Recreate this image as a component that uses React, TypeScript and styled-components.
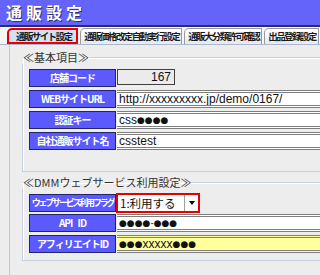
import * as React from 'react'
import styled, { createGlobalStyle } from 'styled-components'

const GlobalStyle = createGlobalStyle`
    html, body { margin: 0; padding: 0; background: #ededed; overflow: hidden; }
    body { font-family: "Noto Sans CJK JP", "Liberation Sans", sans-serif; }
`

const Page = styled.div`
    width: 320px;
    height: 275px;
    overflow: hidden;
    display: flex;
    flex-direction: column;
    background: #ededed;
`

const Header = styled.h1`
    margin: 0;
    height: 27px;
    box-sizing: border-box;
    padding-left: 6px;
    background: #6464fa;
    border-bottom: 2px solid #2b2b6e;
    color: #fff;
    font-size: 16px;
    font-weight: bold;
    letter-spacing: 4px;
    line-height: 25px;
    text-shadow: 1px 1px 0 #30307a;
    white-space: nowrap;
`

const TabBar = styled.div`
    display: flex;
    align-items: flex-end;
    gap: 2px;
    height: 18px;
    box-sizing: border-box;
    padding: 1px 0 0 7px;
    background: #f6f6f6;
    border-bottom: 1px solid #aab8d0;
    white-space: nowrap;
`

const Tab = styled.div<{ $active?: boolean }>`
    flex: none;
    height: 16px;
    box-sizing: border-box;
    padding: 0 ${p => p.$active ? 5 : 2}px 0 ${p => p.$active ? 7 : 3}px;
    border: ${p => p.$active ? '2px solid #e80000' : '1px solid #9a9a9a'};
    border-bottom: ${p => p.$active ? '2px solid #e80000' : 'none'};
    border-top-left-radius: 5px;
    background: ${p => p.$active ? '#d3e1f1' : 'linear-gradient(#ffffff, #e6e9ee)'};
    color: #1a1a1a;
    font-size: 9.5px;
    font-weight: bold;
    letter-spacing: -1.6px;
    line-height: ${p => p.$active ? 12 : 14}px;
`

const Panel = styled.div`
    flex: 1;
    margin-left: 9px;
    border-left: 1px solid #b9c6dc;
    padding: 6px 0 0 12px;
    overflow: hidden;
`

const Fieldset = styled.fieldset<{ $second?: boolean }>`
    margin: ${p => p.$second ? '4px' : '0'} 0 0 0;
    width: 330px;
    box-sizing: border-box;
    padding: ${p => p.$second ? '4px 0 7px 6px' : '5px 0 21px 6px'};
    border: 1px solid #c6cfdf;
    border-right: none;
    box-shadow: inset 1px 1px 0 #ffffff;
    min-width: 0;
`

const Legend = styled.legend`
    margin-left: -7px;
    padding: 0 1px;
    font-size: 11px;
    line-height: 13px;
    color: #333;
    white-space: nowrap;
`

const Rows = styled.div`
    display: flex;
    flex-direction: column;
    gap: 3px;
`

const Row = styled.div`
    display: grid;
    grid-template-columns: 87px 1fr;
    column-gap: 1px;
    height: 18px;
    align-items: center;
`

const Label = styled.div<{ $tight?: boolean }>`
    height: 18px;
    box-sizing: border-box;
    background: #5a5aff;
    border: 1px solid #23236b;
    color: #fff;
    font-size: ${p => p.$tight ? 9 : 10}px;
    font-weight: bold;
    letter-spacing: ${p => p.$tight ? -2.2 : -1}px;
    word-spacing: 4px;
    line-height: 16px;
    text-align: center;
    white-space: nowrap;
    overflow: hidden;
`

const TextCell = styled.div<{ $yellow?: boolean }>`
    height: 18px;
    box-sizing: border-box;
    display: flex;
    align-items: center;
    padding-left: 2px;
    background: ${p => p.$yellow ? '#ffff9c' : '#ffffff'};
    border-top: 3px double #7e7e7e;
    border-bottom: 3px double #7e7e7e;
    font-family: "Liberation Sans", "DejaVu Sans", sans-serif;
    font-size: 12px;
    color: #111;
    white-space: nowrap;
    overflow: hidden;
`

const Dots = styled.span`
    font-family: "DejaVu Sans", sans-serif;
    font-size: 9px;
    letter-spacing: 0;
    color: #111;
`

const ShortInput = styled.div`
    width: 58px;
    height: 16px;
    box-sizing: border-box;
    border: 1px solid #404040;
    background: #ebebeb;
    text-align: right;
    padding-right: 3px;
    font-family: "Liberation Sans", sans-serif;
    font-size: 12px;
    line-height: 14px;
    color: #111;
    margin-top: -2px;
`

const Select = styled.div`
    width: 84px;
    height: 20px;
    box-sizing: border-box;
    display: flex;
    border: 2px solid #e60000;
    background: #fff;
    margin-left: -1px;
`

const SelectText = styled.div`
    flex: 1;
    padding-left: 2px;
    font-size: 11.5px;
    line-height: 16px;
    color: #111;
    white-space: nowrap;
    overflow: hidden;
`

const SelectArrow = styled.div`
    width: 13px;
    border-left: 1px solid #a0a0a0;
    display: flex;
    align-items: center;
    justify-content: center;
`

const Triangle = styled.span`
    width: 0;
    height: 0;
    border-left: 3.5px solid transparent;
    border-right: 3.5px solid transparent;
    border-top: 4px solid #000;
`

interface IRow
{
    label: string
    tight?: boolean
    kind: 'short' | 'text' | 'select'
    value: React.ReactNode
    yellow?: boolean
}

const basicRows: IRow[] = [
    { label: '店舗コード', kind: 'short', value: '167' },
    { label: 'WEBサイトURL', kind: 'text', value: 'http://xxxxxxxxx.jp/demo/0167/' },
    { label: '認証キー', kind: 'text', value: <>css<Dots>●●●●</Dots></> },
    { label: '自社通販サイト名', kind: 'text', value: 'csstest' },
]

const dmmRows: IRow[] = [
    { label: 'ウェブサービス利用フラグ', tight: true, kind: 'select', value: '1:利用する' },
    { label: 'API ID', kind: 'text', value: <Dots>●●●●-●●●</Dots> },
    { label: 'アフィリエイトID', kind: 'text', yellow: true, value: <><Dots>●●●</Dots>xxxxx<Dots>●●●</Dots></> },
]

const tabs = ['通販サイト設定', '通販価格改定自動実行設定', '通販大分類許可確認', '出品登録設定']

function Field({ row }: { row: IRow })
{
    return (
        <Row>
            <Label $tight={row.tight}>{row.label}</Label>
            {row.kind === 'short' && <ShortInput>{row.value}</ShortInput>}
            {row.kind === 'text' && <TextCell $yellow={row.yellow}>{row.value}</TextCell>}
            {row.kind === 'select' && (
                <Select>
                    <SelectText>{row.value}</SelectText>
                    <SelectArrow><Triangle /></SelectArrow>
                </Select>
            )}
        </Row>
    )
}

const App: React.FunctionComponent = () =>
{
    return (
        <Page>
            <GlobalStyle />
            <Header>通販設定</Header>
            <TabBar>
                {tabs.map((t, i) => <Tab key={t} $active={i === 0}>{t}</Tab>)}
            </TabBar>
            <Panel>
                <Fieldset>
                    <Legend>≪基本項目≫</Legend>
                    <Rows>
                        {basicRows.map(r => <Field key={r.label} row={r} />)}
                    </Rows>
                </Fieldset>
                <Fieldset $second>
                    <Legend>≪DMMウェブサービス利用設定≫</Legend>
                    <Rows>
                        {dmmRows.map(r => <Field key={r.label} row={r} />)}
                    </Rows>
                </Fieldset>
            </Panel>
        </Page>
    )
}

export default App
